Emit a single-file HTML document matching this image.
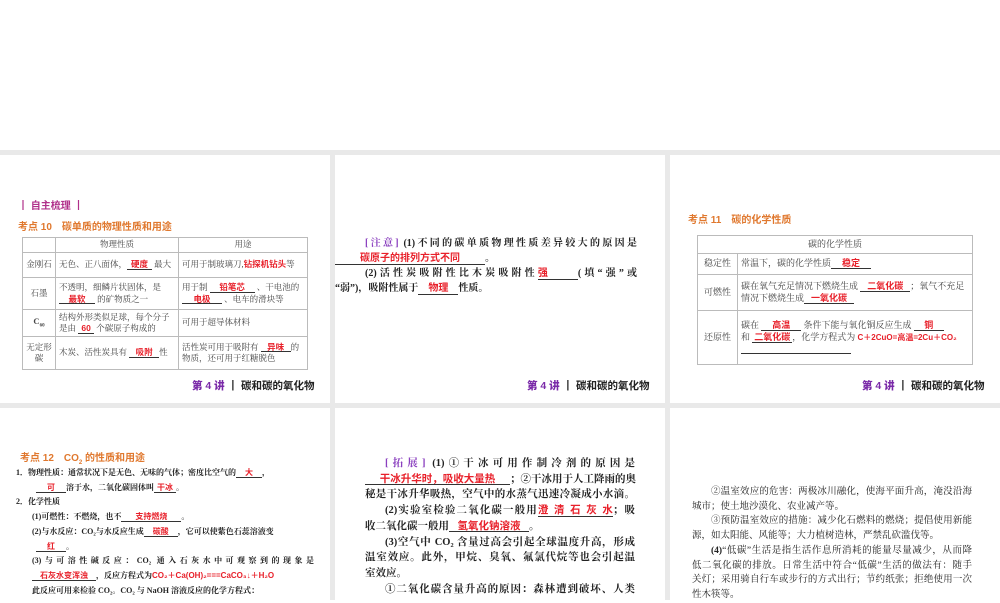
<!DOCTYPE html>
<html><head><meta charset="utf-8">
<style>
*{margin:0;padding:0;box-sizing:border-box}
body{width:1000px;height:600px;overflow:hidden;background:#fff;position:relative;font-family:"Liberation Serif","Noto Serif CJK SC","Noto Sans CJK SC",serif;color:#222}
.g{position:absolute;background:#e9e9e9}
.a{position:absolute;white-space:nowrap}
.r{color:#e8202a;font-family:"Liberation Sans","Noto Sans CJK SC",sans-serif;font-weight:bold}
.u{border-bottom:1px solid #333;display:inline-block;text-align:center;line-height:1}
.t{position:absolute;border-collapse:collapse;font-size:8.5px;color:#444}
.t td{border:1px solid #bbb;padding:1px 3px;line-height:1.3;vertical-align:middle}
.ft{position:absolute;font-family:"Liberation Sans","Noto Sans CJK SC",sans-serif;font-weight:bold;font-size:10.5px;white-space:nowrap}
.ft b{color:#7a2aa8}
.k{color:#e0782e;font-family:"Liberation Sans","Noto Sans CJK SC",sans-serif;font-weight:bold;font-size:10px}
.j{text-align:justify;text-align-last:justify}
.p{color:#8a3fbf;font-weight:bold}
</style></head><body>
<div class="g" style="left:0;top:150px;width:1000px;height:5px"></div>
<div class="g" style="left:0;top:403px;width:1000px;height:5px"></div>
<div class="g" style="left:330px;top:150px;width:5px;height:450px"></div>
<div class="g" style="left:665px;top:150px;width:5px;height:450px"></div>

<!-- slide 1 -->
<div class="a" style="left:18px;top:197px;font-size:10px;color:#b0308a;font-weight:bold;font-family:'Liberation Sans','Noto Sans CJK SC',sans-serif">┃ 自主梳理 ┃</div>
<div class="a k" style="left:18px;top:218px">考点 10　碳单质的物理性质和用途</div>
<table class="t" style="left:22px;top:237px;width:286px">
<tr style="height:15px"><td style="width:33px"></td><td style="width:123px;text-align:center">物理性质</td><td style="text-align:center">用途</td></tr>
<tr style="height:25px"><td style="text-align:center">金刚石</td><td>无色、正八面体，<span class="u r" style="width:25px">硬度</span> 最大</td><td>可用于制玻璃刀,<span class="r">钻探机钻头</span>等</td></tr>
<tr style="height:32px"><td style="text-align:center">石墨</td><td>不透明，细鳞片状固体，是<span class="u r" style="width:36px">最软</span> 的矿物质之一</td><td>用于制 <span class="u r" style="width:45px">铅笔芯</span> 、干电池的<span class="u r" style="width:40px">电极</span> 、电车的滑块等</td></tr>
<tr style="height:27px"><td style="text-align:center;font-weight:bold">C<sub style="font-size:5px">60</sub></td><td>结构外形类似足球，每个分子是由 <span class="u r" style="width:16px">60</span> 个碳原子构成的</td><td>可用于超导体材料</td></tr>
<tr style="height:33px"><td style="text-align:center">无定形碳</td><td>木炭、活性炭具有 <span class="u r" style="width:30px">吸附</span>性</td><td>活性炭可用于吸附有 <span class="u r" style="width:30px">异味</span>的物质，还可用于红糖脱色</td></tr>
</table>
<div class="ft" style="left:192px;top:378px"><b>第 4 讲</b> ┃ 碳和碳的氧化物</div>

<!-- slide 2 -->
<div class="a" style="left:365px;top:236px;width:272px;font-size:10px;font-weight:bold;line-height:15px">
<div class="j"><span class="p">[注意]</span> (1)不同的碳单质物理性质差异较大的原因是</div>
<div style="margin-left:-30px"><span class="u r" style="width:150px">碳原子的排列方式不同</span>。</div>
<div class="j">(2)活性炭吸附性比木炭吸附性<span class="u r" style="width:40px">强</span>(填“强”或</div>
<div style="margin-left:-30px">“弱”)，吸附性属于<span class="u r" style="width:40px">物理</span>性质。</div>
</div>
<div class="ft" style="left:527px;top:378px"><b>第 4 讲</b> ┃ 碳和碳的氧化物</div>

<!-- slide 3 -->
<div class="a k" style="left:688px;top:211px">考点 11　碳的化学性质</div>
<table class="t" style="left:697px;top:235px;width:276px;font-size:9px">
<tr style="height:18px"><td colspan="2" style="text-align:center">碳的化学性质</td></tr>
<tr style="height:21px"><td style="width:40px;text-align:center">稳定性</td><td>常温下，碳的化学性质<span class="u r" style="width:40px">稳定</span></td></tr>
<tr style="height:36px"><td style="text-align:center">可燃性</td><td>碳在氧气充足情况下燃烧生成 <span class="u r" style="width:50px">二氧化碳</span>；氧气不充足情况下燃烧生成<span class="u r" style="width:50px">一氧化碳</span></td></tr>
<tr style="height:54px"><td style="text-align:center">还原性</td><td>碳在 <span class="u r" style="width:40px">高温</span> 条件下能与氧化铜反应生成 <span class="u r" style="width:30px">铜</span><br>和 <span class="u r" style="width:40px">二氧化碳</span>，化学方程式为 <span class="r" style="font-size:8px">C＋2CuO=高温=2Cu＋CO₂</span><br><span class="u" style="width:110px">&nbsp;</span></td></tr>
</table>
<div class="ft" style="left:862px;top:378px"><b>第 4 讲</b> ┃ 碳和碳的氧化物</div>

<!-- slide 4 -->
<div class="a k" style="left:20px;top:449px">考点 12　CO<sub style="font-size:6px">2</sub> 的性质和用途</div>
<div class="a" style="left:16px;top:466px;width:298px;font-size:8px;font-weight:bold;line-height:14.7px">
<div>1．物理性质：通常状况下是无色、无味的气体；密度比空气的<span class="u r" style="width:26px">大</span>，</div>
<div style="padding-left:20px"><span class="u r" style="width:30px">可</span>溶于水，二氧化碳固体叫<span class="u r" style="width:22px">干冰</span>。</div>
<div>2．化学性质</div>
<div style="padding-left:16px">(1)可燃性：不燃烧，也不<span class="u r" style="width:60px">支持燃烧</span>。</div>
<div style="padding-left:16px">(2)与水反应：CO₂与水反应生成<span class="u r" style="width:34px">碳酸</span>，它可以使紫色石蕊溶液变</div>
<div style="padding-left:20px"><span class="u r" style="width:30px">红</span>。</div>
<div style="padding-left:16px" class="j">(3)与可溶性碱反应：CO₂ 通入石灰水中可观察到的现象是</div>
<div style="padding-left:16px"><span class="u r" style="width:64px">石灰水变浑浊</span>，反应方程式为<span class="r">CO₂＋Ca(OH)₂===CaCO₃↓＋H₂O</span></div>
<div style="padding-left:16px">此反应可用来检验 CO₂。CO₂ 与 NaOH 溶液反应的化学方程式：</div>
</div>

<!-- slide 5 -->
<div class="a" style="left:365px;top:456px;width:270px;font-size:10.5px;font-weight:bold;line-height:15.7px">
<div class="j" style="padding-left:20px"><span class="p">[拓展]</span> (1)①干冰可用作制冷剂的原因是</div>
<div><span class="u r" style="width:145px">干冰升华时，吸收大量热</span>；②干冰用于人工降雨的奥</div>
<div class="j">秘是干冰升华吸热，空气中的水蒸气迅速冷凝成小水滴。</div>
<div class="j" style="padding-left:20px">(2)实验室检验二氧化碳一般用<span class="u r" style="width:75px">澄清石灰水</span>；吸</div>
<div>收二氧化碳一般用<span class="u r" style="width:80px">氢氧化钠溶液</span>。</div>
<div class="j" style="padding-left:20px">(3)空气中 CO₂ 含量过高会引起全球温度升高，形成</div>
<div class="j">温室效应。此外，甲烷、臭氧、氟氯代烷等也会引起温</div>
<div>室效应。</div>
<div class="j" style="padding-left:20px">①二氧化碳含量升高的原因：森林遭到破坏、人类</div>
</div>

<!-- slide 6 -->
<div class="a" style="left:692px;top:485px;width:280px;font-size:9.5px;line-height:14.7px">
<div class="j" style="padding-left:19px">②温室效应的危害：两极冰川融化，使海平面升高，淹没沿海</div>
<div>城市；使土地沙漠化、农业减产等。</div>
<div class="j" style="padding-left:19px">③预防温室效应的措施：减少化石燃料的燃烧；提倡使用新能</div>
<div>源，如太阳能、风能等；大力植树造林，严禁乱砍滥伐等。</div>
<div class="j" style="padding-left:19px"><b>(4)</b>“低碳”生活是指生活作息所消耗的能量尽量减少，从而降</div>
<div class="j">低二氧化碳的排放。日常生活中符合“低碳”生活的做法有：随手</div>
<div class="j">关灯；采用骑自行车或步行的方式出行；节约纸张；拒绝使用一次</div>
<div>性木筷等。</div>
</div>
</body></html>
